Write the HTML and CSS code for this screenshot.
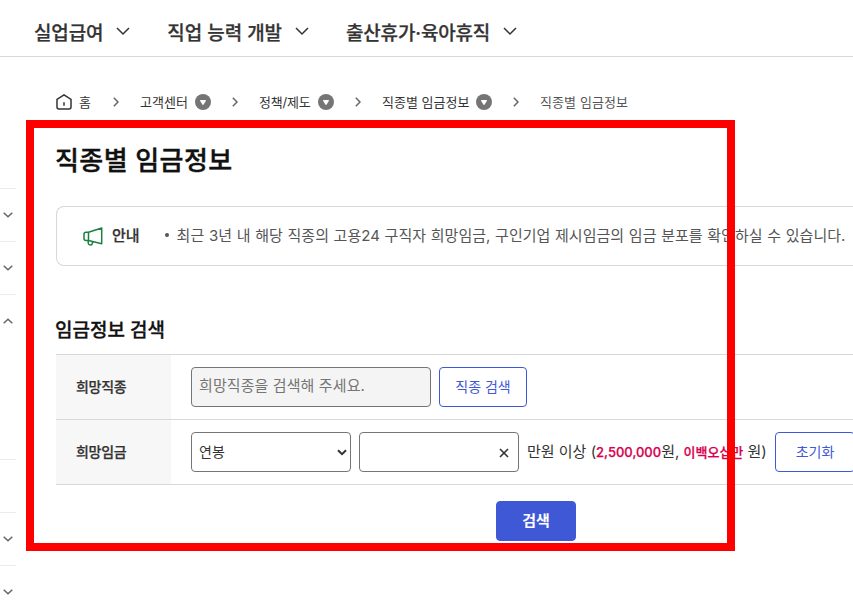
FILE: index.html
```
<!DOCTYPE html>
<html lang="ko">
<head>
  <meta charset="UTF-8">
  <title>직종별 임금정보</title>
  <link rel="stylesheet" href="styles.css">
</head>
<body>
  <header class="gnb">
    <a class="gnb-item">실업급여 <svg width="14" height="9" viewBox="0 0 14 9"><path d="M1 1l6 6 6-6"/></svg></a>
    <a class="gnb-item">직업 능력 개발 <svg width="14" height="9" viewBox="0 0 14 9"><path d="M1 1l6 6 6-6"/></svg></a>
    <a class="gnb-item">출산휴가·육아휴직 <svg width="14" height="9" viewBox="0 0 14 9"><path d="M1 1l6 6 6-6"/></svg></a>
  </header>

  <div class="wrap">
    <aside class="side">
      <div class="side-item"><svg width="10" height="6" viewBox="0 0 10 6"><path d="M.7.7L5 4.8 9.3.7"/></svg></div>
      <div class="side-item"><svg width="10" height="6" viewBox="0 0 10 6"><path d="M.7.7L5 4.8 9.3.7"/></svg></div>
      <div class="side-item open"><svg width="10" height="6" viewBox="0 0 10 6"><path d="M.7 5.3L5 1.2l4.3 4.1"/></svg></div>
      <div class="side-item"></div>
      <div class="side-item"><svg width="10" height="6" viewBox="0 0 10 6"><path d="M.7.7L5 4.8 9.3.7"/></svg></div>
      <div class="side-item"><svg width="10" height="6" viewBox="0 0 10 6"><path d="M.7.7L5 4.8 9.3.7"/></svg></div>
    </aside>

    <main class="content">
      <nav class="crumbs">
        <span class="crumb home">
          <svg class="ico-home" width="16" height="16" viewBox="0 0 16 16"><path d="M1 5.4L8 .9l7 4.5V13a2 2 0 0 1-2 2H3a2 2 0 0 1-2-2zM8 8.2v3.6"/></svg>
          <span>홈</span>
        </span>
        <svg class="sep" width="6" height="10" viewBox="0 0 6 10"><path d="M.8.8L5 5 .8 9.2"/></svg>
        <span class="crumb c1"><span>고객센터</span> <svg class="drop" width="16" height="16" viewBox="0 0 16 16"><circle cx="8" cy="8" r="8"/><path d="M5.8 6.7h4.4L8 10.2z"/></svg></span>
        <svg class="sep" width="6" height="10" viewBox="0 0 6 10"><path d="M.8.8L5 5 .8 9.2"/></svg>
        <span class="crumb c2"><span>정책/제도</span> <svg class="drop" width="16" height="16" viewBox="0 0 16 16"><circle cx="8" cy="8" r="8"/><path d="M5.8 6.7h4.4L8 10.2z"/></svg></span>
        <svg class="sep" width="6" height="10" viewBox="0 0 6 10"><path d="M.8.8L5 5 .8 9.2"/></svg>
        <span class="crumb c3"><span>직종별 임금정보</span> <svg class="drop" width="16" height="16" viewBox="0 0 16 16"><circle cx="8" cy="8" r="8"/><path d="M5.8 6.7h4.4L8 10.2z"/></svg></span>
        <svg class="sep" width="6" height="10" viewBox="0 0 6 10"><path d="M.8.8L5 5 .8 9.2"/></svg>
        <span class="crumb current"><span>직종별 임금정보</span></span>
      </nav>

      <h1 class="page-title">직종별 임금정보</h1>

      <div class="notice">
        <svg class="ico-notice" width="20" height="19" viewBox="0 0 20 19"><path d="M5.5 5.2L18.7 1v15.8L5.5 13.4zM5.5 5.2H3a2 2 0 0 0-2 2v4.2a2 2 0 0 0 2 2h2.5M5.2 13.5v2.2a2.1 2.1 0 0 0 4.2.4v-1.6"/></svg>
        <strong class="notice-title">안내</strong>
        <ul class="notice-list">
          <li>최근 3년 내 해당 직종의 고용24 구직자 희망임금, 구인기업 제시임금의 임금 분포를 확인하실 수 있습니다.</li>
        </ul>
      </div>

      <h2 class="section-title">임금정보 검색</h2>
      <div class="form-table">
        <div class="form-row">
          <div class="form-head">희망직종</div>
          <div class="form-cell">
            <input class="field job" type="text" placeholder="희망직종을 검색해 주세요." readonly>
            <button class="btn line">직종 검색</button>
          </div>
        </div>
        <div class="form-row">
          <div class="form-head">희망임금</div>
          <div class="form-cell">
            <div class="field pay-type"><span>연봉</span> <svg width="10" height="7" viewBox="0 0 10 7"><path d="M1 1.2l4 4 4-4"/></svg></div>
            <div class="field pay"><svg width="10" height="10" viewBox="0 0 10 10"><path d="M1 1l8 8M9 1L1 9"/></svg></div>
            <span class="pay-text">만원 이상 (<em>2,500,000</em>원, <em>이백오십만</em> 원)</span>
            <button class="btn line reset">초기화</button>
          </div>
        </div>
      </div>

      <div class="btn-area"><button class="btn primary">검색</button></div>
    </main>
  </div>

  <div class="highlight"></div>
</body>
</html>
```
FILE: styles.css
```
* {
  box-sizing: border-box;
}
body {
  margin: 0;
  height: 605px;
  overflow: hidden;
  position: relative;
  background: #fff;
  color: #333;
  font-family: Inter, "Noto Sans CJK KR", sans-serif;
  font-size: 15px;
}
svg {
  fill: none;
  stroke: #333;
  stroke-width: 1.5;
  flex-shrink: 0;
}
button, input {
  font-family: inherit;
}
.gnb {
  display: flex;
  gap: 37px;
  height: 57px;
  padding: 6px 0 0 34px;
  border-bottom: 1px solid #d8d8d8;
}
.gnb-item {
  display: flex;
  align-items: center;
  gap: 13px;
  font-size: 19px;
  font-weight: 500;
  letter-spacing: -0.15px;
  word-spacing: 0.4px;
  white-space: nowrap;
  -webkit-text-stroke: 0.25px;
}
.gnb-item svg {
  margin-top: 1px;
}
.wrap {
  display: flex;
  overflow: hidden;
}
.side {
  width: 16px;
  margin: 131px 40px 0 0;
  flex-shrink: 0;
}
.side-item {
  height: 53px;
  padding: 23px 0 0 3px;
  border-top: 1px solid #ebebeb;
  line-height: 0;
}
.side-item.open {
  height: 165px;
}
.side-item svg {
  stroke: #666;
}
.content {
  width: 797px;
  flex-shrink: 0;
}
.crumbs {
  display: flex;
  align-items: center;
  height: 20px;
  margin-top: 35px;
  font-size: 13px;
  white-space: nowrap;
}
.crumb {
  display: flex;
  align-items: center;
  gap: 7px;
}
.crumb span {
  padding-bottom: 2px;
}
.home {
  width: 57px;
}
.sep {
  stroke: #666;
  margin-right: 21px;
}
.c1 {
  width: 92px;
}
.c2 {
  width: 96px;
  letter-spacing: -0.2px;
}
.c3 {
  width: 131px;
}
.current {
  color: #555;
  letter-spacing: 0.1px;
}
.drop {
  stroke: none;
  fill: #757575;
}
.drop path {
  fill: #fff;
  stroke: #fff;
  stroke-linejoin: round;
}
.page-title {
  margin: 29px 0 0 -1px;
  height: 40px;
  line-height: 40px;
  font-size: 26px;
  font-weight: 500;
  letter-spacing: 0.4px;
  color: #111;
  -webkit-text-stroke: 0.4px;
}
.notice {
  display: flex;
  align-items: center;
  height: 60px;
  margin-top: 25px;
  padding-left: 26px;
  border: 1px solid #d8d8d8;
  border-radius: 8px 0 0 8px;
  border-right: 0;
  white-space: nowrap;
}
.ico-notice {
  stroke: #1c8040;
  stroke-linejoin: round;
}
.notice-title {
  margin-left: 9px;
  padding-bottom: 3px;
  font-weight: 500;
  -webkit-text-stroke: 0.25px;
}
.notice-list {
  margin: 0 0 0 25px;
  padding: 0 0 3px;
  list-style: none;
  color: #555;
  letter-spacing: 0.03px;
  word-spacing: 0.4px;
}
.notice-list li {
  display: flex;
  align-items: center;
}
.notice-list li::before {
  content: "";
  width: 4px;
  height: 4px;
  margin-right: 8px;
  border-radius: 50%;
  background: #555;
}
.section-title {
  margin: 50px 0 8px -1px;
  height: 30px;
  line-height: 30px;
  font-size: 19px;
  font-weight: 500;
  color: #111;
  -webkit-text-stroke: 0.3px;
}
.form-table {
  border-top: 1px solid #d8d8d8;
}
.form-row {
  display: flex;
  height: 65px;
  border-bottom: 1px solid #d8d8d8;
}
.form-head {
  display: flex;
  align-items: center;
  width: 115px;
  padding: 0 0 2px 20px;
  background: #f7f7f7;
  flex-shrink: 0;
  font-size: 14px;
  font-weight: 500;
  letter-spacing: -0.3px;
  -webkit-text-stroke: 0.25px;
}
.form-cell {
  display: flex;
  align-items: center;
  gap: 8px;
  padding-left: 20px;
  white-space: nowrap;
}
.field {
  display: flex;
  align-items: center;
  height: 40px;
  padding: 0 8px;
  border: 1px solid #757575;
  border-radius: 4px;
  background: #fff;
  flex-shrink: 0;
}
.job {
  width: 240px;
  padding: 0 7px 3px;
  background: #f4f4f4;
  font-size: 15px;
  letter-spacing: 0.1px;
}
.job::placeholder {
  color: #757575;
}
.pay-type {
  width: 160px;
  justify-content: space-between;
  padding: 0 3px 0 7px;
  font-size: 14px;
}
.pay-type span {
  padding-bottom: 3px;
}
.pay-type svg {
  stroke-width: 2;
}
.pay {
  width: 160px;
  justify-content: flex-end;
  padding: 2px 9px 0;
}
.pay svg {
  stroke-width: 1.6;
}
.pay-text {
  width: 240px;
  padding-bottom: 3px;
}
.pay-text em {
  color: #d8004f;
  font-style: normal;
  font-weight: 500;
  font-size: 13px;
  -webkit-text-stroke: 0.25px;
}
.btn {
  height: 40px;
  padding: 0 0 3px;
  border: 1px solid #3f59d6;
  border-radius: 4px;
  flex-shrink: 0;
  font-size: 14px;
}
.line {
  width: 88px;
  background: #fff;
  color: #3f59d6;
}
.reset {
  width: 80px;
}
.primary {
  width: 80px;
  background: #3f59d6;
  color: #fff;
  font-size: 15px;
  font-weight: 700;
}
.btn-area {
  display: flex;
  padding: 16px 0 0 440px;
}
/* red frame over the search area */
.highlight {
  position: absolute;
  left: 26px;
  top: 120px;
  width: 709px;
  height: 431px;
  border: 8px solid #f00;
}
```
